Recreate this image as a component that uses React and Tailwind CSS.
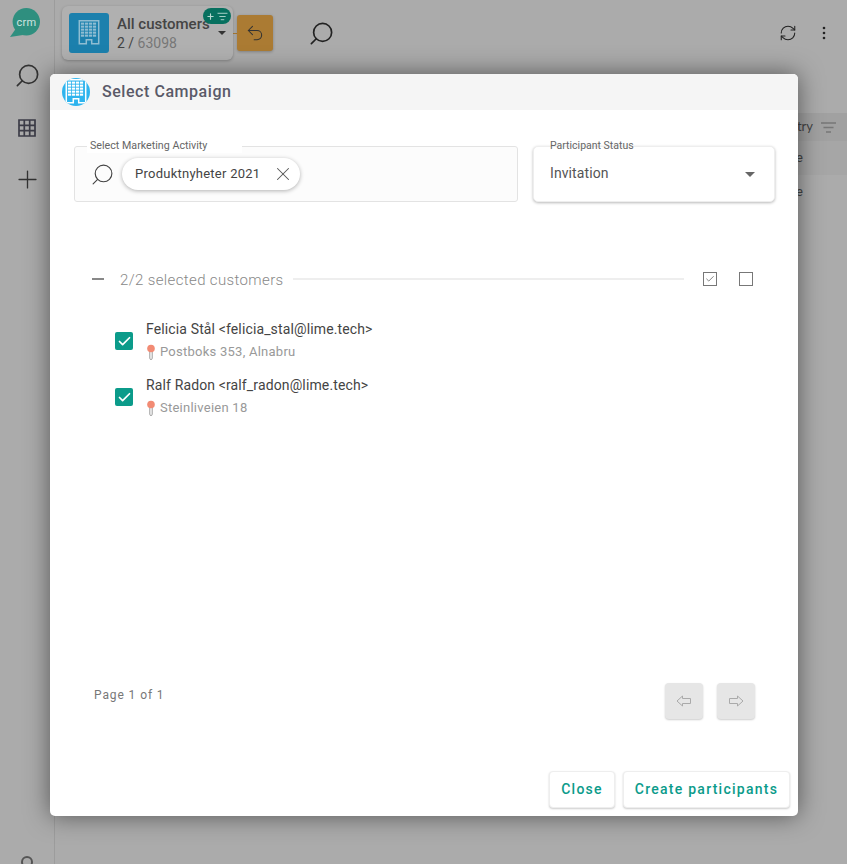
import { Search, Plus, RefreshCw, Undo2, X, Check, ListFilter } from 'lucide-react'

function Building({ className, color = '#fff' }) {
  const cells = []
  for (let r = 0; r < 5; r++) {
    for (let c = 0; c < 4; c++) {
      cells.push(<rect key={`${r}-${c}`} x={6.9 + c * 4} y={4.6 + r * 3} width="3.2" height="2.1" fill={color} />)
    }
  }
  return (
    <svg viewBox="0 0 30 30" className={className}>
      <path d="M5.3 2.7h19.4v23h-7v-4h-5.4v4h-7z" fill="none" stroke={color} strokeWidth="1.5" />
      {cells}
    </svg>
  )
}

function Pin() {
  return (
    <svg viewBox="0 0 10 16" className="w-[10px] h-[16px] shrink-0">
      <rect x="3.8" y="6" width="2.4" height="9.5" rx="1.2" fill="none" stroke="#9a9a9a" strokeWidth="1" />
      <circle cx="5" cy="4.5" r="3.8" fill="#f28b74" />
    </svg>
  )
}

function Customer({ name, address }) {
  return (
    <div className="flex items-center h-[56px]">
      <div className="w-[18px] h-[18px] rounded-[2px] bg-[#0b9b8a] flex items-center justify-center">
        <Check className="w-[15px] h-[15px] text-white" strokeWidth={2.75} />
      </div>
      <div className="ml-[13px] pb-[3px]">
        <div className="text-[14px] leading-[18px] tracking-[0.13px] text-[#444]">{name}</div>
        <div className="flex items-center gap-[4px] mt-[6px] text-[13px] leading-[16px] tracking-[0.25px] text-[#999]">
          <Pin />
          {address}
        </div>
      </div>
    </div>
  )
}

export default function App() {
  return (
    <div className="relative h-[864px] overflow-hidden bg-[#ababab] font-['Roboto',sans-serif] flex">
      {/* Sidebar */}
      <aside className="w-[55px] shrink-0 border-r border-[#9c9c9c] flex flex-col items-center">
        <div className="relative mt-[8px] w-[30px] h-[30px] ml-[-5px]">
          <svg viewBox="0 0 30 30" className="w-[30px] h-[30px]">
            <circle cx="16.3" cy="13.7" r="13.7" fill="#2f8f7f" />
            <path d="M0 29 7 19l6 8z" fill="#2f8f7f" />
          </svg>
          <span className="absolute left-[7px] top-[7px] text-[11px] leading-[16px] tracking-[0.3px] text-[#cfe5e0]">crm</span>
        </div>
        <Search className="w-[27px] h-[27px] mt-[24px] text-[#333] -scale-x-100" strokeWidth={1.5} />
        <svg viewBox="0 0 18 18" className="w-[18px] h-[18px] mt-[30px]">
          <path d="M1 1h16v16H1zM6.3 1v16M11.7 1v16M1 6.3h16M1 11.7h16" fill="none" stroke="#3d3d48" strokeWidth="1.7" />
        </svg>
        <Plus className="w-[29px] h-[29px] mt-[28px] text-[#333]" strokeWidth={1.1} />
        <div className="mt-auto mb-[-4px] w-[12px] h-[12px] rounded-full border-2 border-[#555]" />
      </aside>

      {/* Page behind the dialog */}
      <div className="flex-1 min-w-0">
        <div className="flex items-start pt-[6px] pl-[7px] pr-[14px]">
          <div className="relative w-[171px] h-[54px] rounded-[6px] bg-[#b0b0b0] shadow-[0_1px_3px_rgba(0,0,0,0.25)] flex items-center pl-[7px]">
            <div className="w-[40px] h-[40px] rounded-[3px] bg-[#1c80ad] flex items-center justify-center">
              <Building className="w-[30px] h-[30px]" color="#8fbdd2" />
            </div>
            <div className="ml-[8px]">
              <div className="text-[15px] leading-[19px] font-medium text-[#444]">All customers</div>
              <div className="text-[14px] leading-[18px] text-[#444]">2 / <span className="text-[#777]">63098</span></div>
            </div>
            <div className="absolute right-[7px] top-[25px] border-x-[4px] border-x-transparent border-t-[4px] border-t-[#333]" />
            <div className="absolute right-[2px] top-[2px] w-[28px] h-[16px] rounded-full bg-[#07705f] flex items-center justify-center gap-[2px] text-[#b5d8d1]">
              <Plus className="w-[9px] h-[9px]" strokeWidth={3} />
              <ListFilter className="w-[11px] h-[11px]" strokeWidth={2} />
            </div>
          </div>
          <div className="w-[4px] h-px bg-[#ab7b33] mt-[27px]" />
          <div className="w-[36px] h-[36px] mt-[9px] rounded-[3px] bg-[#ab7b33] flex items-center justify-center shadow-[0_1px_3px_rgba(0,0,0,0.25)]">
            <Undo2 className="w-[20px] h-[20px] text-[#333]" strokeWidth={1.25} />
          </div>
          <Search className="w-[27px] h-[27px] mt-[14px] ml-[35px] text-[#222] -scale-x-100" strokeWidth={1.5} />
          <RefreshCw className="w-[18px] h-[18px] mt-[18px] ml-auto text-[#222]" strokeWidth={1.4} />
          <svg viewBox="0 0 4 14" className="w-[4px] h-[14px] mt-[20px] ml-[25px] mr-[7px]">
            <circle cx="2" cy="2" r="1.3" fill="#222" />
            <circle cx="2" cy="7" r="1.3" fill="#222" />
            <circle cx="2" cy="12" r="1.3" fill="#222" />
          </svg>
        </div>
        <div className="mt-[53px] h-[28px] bg-[#a1a1a1] flex items-center justify-end pr-[11px] text-[13px] text-[#444] font-['Lato',sans-serif]">
          try
          <svg viewBox="0 0 15 11" className="w-[15px] h-[11px] ml-[8px]">
            <path d="M0 1h15M2.5 5.5h10M5 10h5" stroke="#777" strokeWidth="1.3" />
          </svg>
        </div>
        <div className="h-[34px] bg-[#a6a6a6] flex items-center justify-end pr-[44px] text-[13px] text-[#444]">e</div>
        <div className="h-[34px] flex items-center justify-end pr-[44px] text-[13px] text-[#444]">e</div>
      </div>

      {/* Dialog */}
      <div className="absolute left-[50px] top-[74px] w-[748px] h-[742px] rounded-[5px] bg-white shadow-[0_0_24px_rgba(0,0,0,0.5)] flex flex-col overflow-hidden">
        <div className="h-[36px] bg-[#f5f5f5] flex items-center pl-[12px] shrink-0">
          <div className="w-[28px] h-[28px] rounded-full bg-[#2eb4ee] flex items-center justify-center overflow-hidden">
            <Building className="w-[30px] h-[30px] shrink-0" />
          </div>
          <h2 className="ml-[12px] text-[16px] font-medium text-[#5a5a68] tracking-[0.55px]">Select Campaign</h2>
        </div>

        <div className="flex gap-[15px] pl-[24px] mt-[36px]">
          <div className="relative w-[444px] h-[56px] rounded-[3px] border border-[#e3e3e3] bg-[#fcfcfc] flex items-center pl-[15px]">
            <span className="absolute left-[12px] top-[-8px] bg-white pl-[3px] pr-[35px] text-[10.7px] leading-[14px] text-[#666]">Select Marketing Activity</span>
            <Search className="w-[25px] h-[25px] text-[#444] -scale-x-100" strokeWidth={1.1} />
            <div className="ml-[7px] h-[32px] rounded-full bg-white shadow-[0_1px_4px_rgba(0,0,0,0.3)] flex items-center pl-[13px] pr-[6px]">
              <span className="text-[13px] tracking-[0.25px] text-[#444]">Produktnyheter 2021</span>
              <X className="w-[22px] h-[22px] ml-[12px] text-[#555]" strokeWidth={1.1} />
            </div>
          </div>
          <div className="relative w-[242px] h-[56px] rounded-[5px] bg-white border border-[#eee] shadow-[0_1px_3px_rgba(0,0,0,0.28)] flex items-center justify-between pl-[16px] pr-[19px]">
            <span className="absolute left-[12px] top-[-8px] px-[4px] text-[10.5px] leading-[14px] text-[#666]">Participant Status</span>
            <span className="pb-[2px] text-[14px] tracking-[0.1px] text-[#555]">Invitation</span>
            <div className="border-x-[5px] border-x-transparent border-t-[5px] border-t-[#666]" />
          </div>
        </div>

        <div className="flex items-center mt-[63px] pl-[42px] pr-[45px] h-[28px]">
          <div className="w-[12px] h-[2px] bg-[#888] shrink-0" />
          <span className="ml-[16px] pt-[2px] text-[15px] font-light tracking-[0.37px] text-[#888] whitespace-nowrap">2/2 selected customers</span>
          <div className="flex-1 h-[2px] bg-[#eeeeee] ml-[9px]" />
          <div className="ml-[19px] w-[14px] h-[14px] border border-[#777] flex items-center justify-center">
            <Check className="w-[10px] h-[10px] text-[#555]" strokeWidth={1.75} />
          </div>
          <div className="ml-[22px] w-[14px] h-[14px] border border-[#777]" />
        </div>

        <div className="mt-[20px] pl-[65px]">
          <Customer name="Felicia Stål <felicia_stal@lime.tech>" address="Postboks 353, Alnabru" />
          <Customer name="Ralf Radon <ralf_radon@lime.tech>" address="Steinliveien 18" />
        </div>

        <div className="mt-auto flex items-start justify-between pl-[44px] pr-[43px]">
          <span className="mt-[3px] text-[12px] tracking-[0.9px] text-[#777]">Page 1 of 1</span>
          <div className="flex gap-[14px]">
            <div className="w-[38px] h-[36px] rounded-[4px] bg-[#e6e6e6] shadow-[0_1px_2px_rgba(0,0,0,0.2)] flex items-center justify-center">
              <svg viewBox="0 0 16 12" className="w-[16px] h-[12px]"><path d="M6.5 1 1 6l5.5 5V8.5h8v-5h-8z" fill="none" stroke="#aaa" /></svg>
            </div>
            <div className="w-[38px] h-[36px] rounded-[4px] bg-[#e6e6e6] shadow-[0_1px_2px_rgba(0,0,0,0.2)] flex items-center justify-center">
              <svg viewBox="0 0 16 12" className="w-[16px] h-[12px]"><path d="M9.5 1 15 6l-5.5 5V8.5h-8v-5h8z" fill="none" stroke="#aaa" /></svg>
            </div>
          </div>
        </div>

        <div className="flex justify-end gap-[8px] pr-[8px] mt-[52px] mb-[8px]">
          <button className="w-[66px] h-[37px] rounded-[4px] bg-white border border-[#eee] shadow-[0_1px_2px_rgba(0,0,0,0.2)] pb-[1px] text-[14px] font-medium tracking-[1.25px] text-[#0b9b8a]">Close</button>
          <button className="w-[167px] h-[37px] rounded-[4px] bg-white border border-[#eee] shadow-[0_1px_2px_rgba(0,0,0,0.2)] pb-[1px] text-[14px] font-medium tracking-[1.25px] text-[#0b9b8a]">Create participants</button>
        </div>
      </div>
    </div>
  )
}
